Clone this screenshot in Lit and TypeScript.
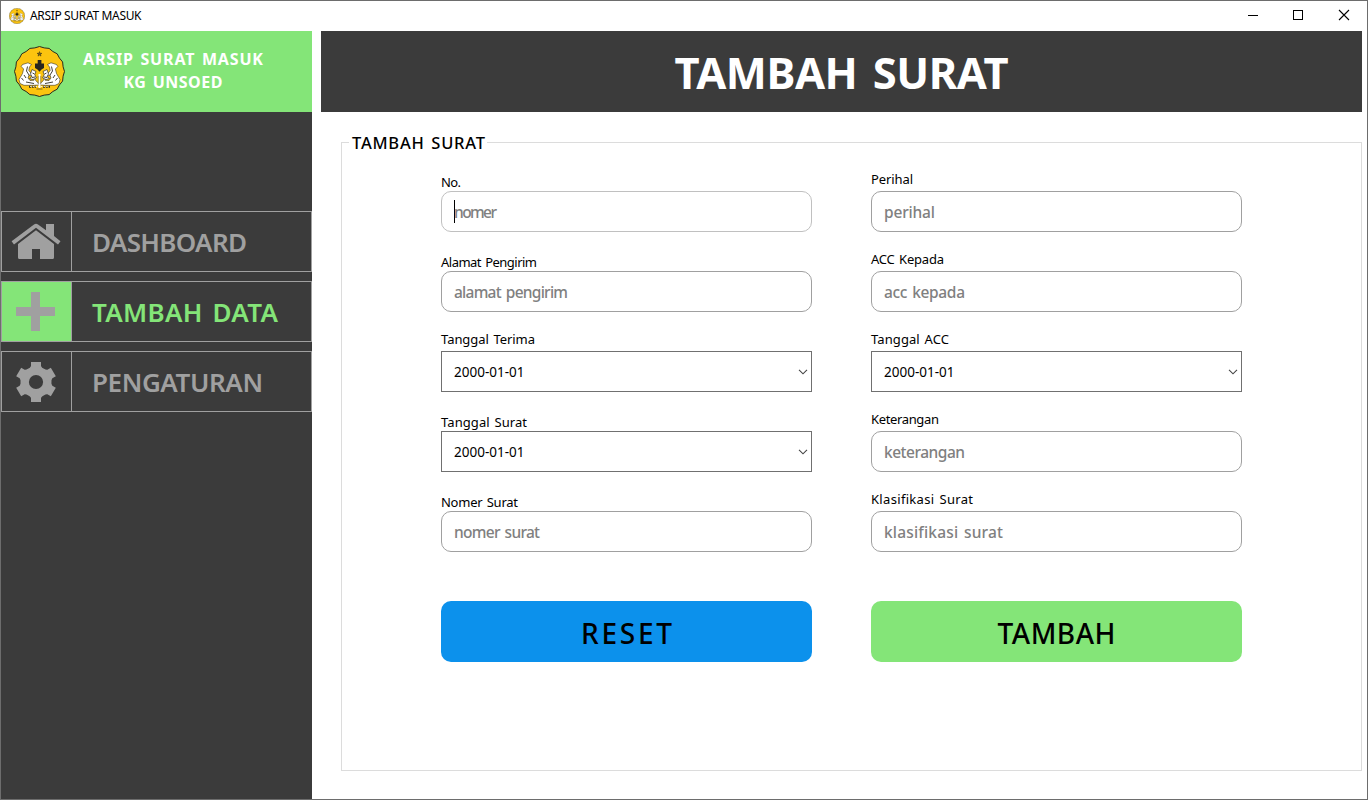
import { LitElement, html, css, svg } from "lit";
import { customElement, property } from "lit/decorators.js";
import { classMap } from "lit/directives/class-map.js";

/** A run of text tracked out (or in) so that it takes up a given width. */
@customElement("tracked-text")
class TrackedText extends LitElement {
  @property() text = "";
  @property({ type: Number }) span = 0;

  static styles = css`
    :host { display: inline-block; white-space: nowrap; word-spacing: 0.1em; }
    .run { display: inline-block; }
  `;

  updated() {
    const run = this.renderRoot.querySelector(".run") as HTMLElement;
    run.style.letterSpacing = "0px";
    const natural = run.getBoundingClientRect().width;
    const step = (this.span - natural) / Math.max(1, this.text.length - 1);
    run.style.letterSpacing = step + "px";
    run.style.marginRight = -step + "px";
  }

  render() {
    return html`<span class="run">${this.text}</span>`;
  }
}

const scallop = (() => {
  let d = "";
  const n = 16;
  for (let i = 0; i < n; i++) {
    const a = (i / n) * Math.PI * 2 - Math.PI / 2;
    const b = ((i + 1) / n) * Math.PI * 2 - Math.PI / 2;
    const m = (a + b) / 2;
    const p = (r: number, t: number) => `${(25.5 + r * Math.cos(t)).toFixed(2)} ${(25.5 + r * Math.sin(t)).toFixed(2)}`;
    d += (i === 0 ? "M" + p(25, a) : "") + "Q" + p(23.6, m) + " " + p(25, b);
  }
  return d + "Z";
})();

const tiger = svg`
  <path d="M8.5 18.5 L14 16.8 L17.5 18.5 L15.5 21 L14.8 24.5 L18 28.5 L20 32 L22.5 35.5 L25 37.5 L25 39 L19 39.3 L10 39.3 L6 37.5 L5 33.5 L8.5 27.5 L9.6 23 L7.2 20.5Z" fill="#fff" stroke="#3a3522" stroke-width=".6"/>
  <path d="M13.5 20.5 L12.5 25 L15 29 M10 29 L12 32 M7.5 32 L9.5 34.5 M12 36 L20 37.5" stroke="#2c2a22" stroke-width=".9" fill="none"/>
  <path d="M15 29 L14 32 L16 34.5 L20 34.2 L18.5 30.5Z" fill="#fcc40f" stroke="#2c2a22" stroke-width=".6"/>
  <path d="M18 23.5 L22 25.5 L20.8 28.5 L22.3 32 L19 33.5 L15.5 32.5 L18 30.5 L16.5 28Z" fill="#fff" stroke="#2c2a22" stroke-width=".7"/>
  <path d="M18.5 27 L20.5 28 M18 31.5 L21 31" stroke="#2c2a22" stroke-width=".9" fill="none"/>`;

const emblem = html`
  <svg class="emblem" viewBox="0 0 51 51">
    <path d=${scallop} fill="#fcc40f" stroke="#2c2b1c" stroke-width="1"/>
    <path d="M25.5 5.6 L26.1 7.3 L27.9 7.3 L26.5 8.4 L27 10.1 L25.5 9.1 L24 10.1 L24.5 8.4 L23.1 7.3 L24.9 7.3Z" fill="#7c6414" stroke="#2c2b1c" stroke-width=".5"/>
    <path d="M23.7 14 H27.4 V17.5 H30 V22 L27.5 23.5 L25.5 25.8 L23.5 23.5 L21 22 V17.5 H23.7Z" fill="#26251f"/>
    <g>${tiger}</g>
    <g transform="translate(51 0) scale(-1 1)">${tiger}</g>
    <path d="M25.5 28 V42" stroke="#fff" stroke-width="2"/>
    <path d="M24.2 30 V38 M26.8 30 V38" stroke="#4a4325" stroke-width=".5"/>
    <path d="M15 40.8 H22 M29 40.8 H36" stroke="#2c2b1c" stroke-width="2" stroke-dasharray="2 .8"/>
    <path d="M16 40.5 H35" stroke="#fff" stroke-width=".8" stroke-dasharray="1.5 1.2"/>
    <path d="M22.5 43 H28.5" stroke="#4a4325" stroke-width=".7"/>
  </svg>`;

const houseIcon = svg`
  <path d="M34 18.3 L52 32 V45.5 Q52 47 50.5 47 H38 V37 H30 V47 H17.5 Q16 47 16 45.5 V32Z"/>
  <path d="M32 12.4 Q34 11.3 36 12.4 L44 18.2 V12 H52 V24 L58.5 29.3 L56 32.5 L34 15.8 L12 32.5 L9.6 29.3Z"/>`;

const plusIcon = svg`<path d="M29 10 H38 V25 H53 V34 H38 V49 H29 V34 H14 V25 H29Z"/>`;

const gearIcon = (() => {
  const tooth = "M27.5 16.5 L29 14 V10 H39 V14 L40.5 16.5 L42 30 H26Z";
  const turns = [0, 60, 120, 180, 240, 300];
  return svg`<mask id="hub"><rect width="69" height="59" fill="#fff"/><circle cx="34" cy="30" r="7.1" fill="#000"/></mask>
    <g mask="url(#hub)"><circle cx="34" cy="30" r="15.5"/>
    ${turns.map((t) => svg`<path d=${tooth} transform=${`rotate(${t} 34 30)`}/>`)}</g>`;
})();

const nav = [
  { text: "DASHBOARD", span: 155, icon: houseIcon, active: false },
  { text: "TAMBAH DATA", span: 186, icon: plusIcon, active: true },
  { text: "PENGATURAN", span: 171, icon: gearIcon, active: false },
];

interface Field { label: string; lw: number; value: string; vw: number; kind: "text" | "date"; low?: boolean; focus?: boolean; }

const left: Field[] = [
  { label: "No.", lw: 20, value: "nomer", vw: 43, kind: "text", low: true, focus: true },
  { label: "Alamat Pengirim", lw: 96, value: "alamat pengirim", vw: 114, kind: "text", low: true },
  { label: "Tanggal Terima", lw: 94, value: "2000-01-01", vw: 70.5, kind: "date" },
  { label: "Tanggal Surat", lw: 86, value: "2000-01-01", vw: 70.5, kind: "date", low: true },
  { label: "Nomer Surat", lw: 77, value: "nomer surat", vw: 86, kind: "text", low: true },
];
const right: Field[] = [
  { label: "Perihal", lw: 42, value: "perihal", vw: 51, kind: "text" },
  { label: "ACC Kepada", lw: 73, value: "acc kepada", vw: 81, kind: "text" },
  { label: "Tanggal ACC", lw: 78, value: "2000-01-01", vw: 70.5, kind: "date" },
  { label: "Keterangan", lw: 68, value: "keterangan", vw: 81, kind: "text" },
  { label: "Klasifikasi Surat", lw: 102, value: "klasifikasi surat", vw: 119, kind: "text" },
];

@customElement("app-root")
class AppRoot extends LitElement {
  static styles = css`
    :host { display: block; font-family: "Comic Sans MS", "Noto Sans", sans-serif; color: #000; }
    * { box-sizing: border-box; }
    .window { width: 1368px; height: 800px; border: 1px solid #6d6d6d; background: #fff; display: flex; flex-direction: column; overflow: hidden; }
    .titlebar { height: 30px; flex: none; display: flex; align-items: center; padding-left: 8px; font: 12px/16px "Noto Sans", sans-serif; }
    .titlebar tracked-text { word-spacing: 0; }
    .titlebar .emblem { width: 16px; height: 16px; margin: -1px 5px 0 0; }
    .caption { margin-left: auto; display: flex; }
    .caption svg { width: 46px; height: 30px; display: block; fill: none; stroke: #000; }
    .body { flex: 1; display: flex; min-height: 0; }
    .sidebar { width: 311px; flex: none; background: #3b3b3b; }
    .brand { height: 81px; background: #84e578; display: flex; align-items: center; padding-left: 13px; color: #fff; font-weight: 700; font-size: 16px; line-height: 23px; }
    .brand .emblem { width: 51px; height: 51px; flex: none; }
    .brand-text { width: 180px; margin-left: 18px; padding-bottom: 2px; display: flex; flex-direction: column; align-items: center; }
    .nav { margin-top: 99px; display: flex; flex-direction: column; gap: 9px; }
    .item { height: 61px; border: 1px solid #a0a0a0; display: flex; align-items: center; color: #a0a0a0; font-size: 26px; font-weight: 600; line-height: 36px; }
    .item svg { width: 70px; height: 59px; flex: none; border-right: 1px solid #a0a0a0; fill: #a0a0a0; margin-right: 20px; }
    .active { color: #84e578; }
    .active svg { background: #84e578; }
    .main { flex: 1; margin: 0 5px 0 9px; display: flex; flex-direction: column; }
    .header { height: 81px; flex: none; background: #3b3b3b; color: #fff; display: flex; align-items: center; justify-content: center; font-weight: 700; font-size: 43.5px; line-height: 60px; padding-top: 1px; }
    .group { margin: 19px 0 28px 20px; padding: 0; border: 1px solid #dcdcdc; flex: 1; min-width: 0; }
    .group legend { margin-left: 7px; padding: 1px 2px 0 3px; font-size: 16.5px; line-height: 21px; font-weight: 500; }
    .form { display: grid; grid-template-columns: 371px 371px; column-gap: 59px; margin: 18px 0 0 99px; }
    .field { height: 80px; }
    .label { height: 20px; font-size: 13px; line-height: 16px; }
    .low { padding-top: 3px; }
    .control { height: 41px; border: 1px solid #a0a0a0; border-radius: 10px; padding: 0 12px; display: flex; align-items: center; font-size: 15.5px; font-weight: 500; color: #808080; }
    .focus { border-color: #c0c0c0; }
    .focus::before { content: ""; width: 1px; height: 23px; background: #000; margin-right: -1px; }
    .date { border-radius: 0; border-color: #707070; color: #000; font-size: 13.5px; font-weight: 400; justify-content: space-between; padding-right: 3px; }
    .date svg { width: 10px; height: 6px; fill: none; stroke: #444; stroke-width: 1.1; }
    .button { margin-top: 30px; height: 61px; border: 0; border-radius: 10px; padding: 3px 0 0; font: inherit; font-size: 28px; line-height: 40px; font-weight: 500; color: #000; }
    .reset { background: #0c91ec; }
    .add { background: #84e578; }
  `;

  private field(f: Field) {
    return html`<div class="field">
      <div class=${classMap({ label: true, low: !!f.low })}><tracked-text .text=${f.label} .span=${f.lw}></tracked-text></div>
      <div class=${classMap({ control: true, date: f.kind === "date", focus: !!f.focus })}>
        <tracked-text .text=${f.value} .span=${f.vw}></tracked-text>
        ${f.kind === "date" ? html`<svg viewBox="0 0 10 6"><path d="M1 .8 L5 4.8 L9 .8"/></svg>` : ""}
      </div>
    </div>`;
  }

  render() {
    return html`<div class="window">
      <div class="titlebar">
        ${emblem}<tracked-text .text=${"ARSIP SURAT MASUK"} .span=${111.5}></tracked-text>
        <div class="caption">
          <svg viewBox="0 0 46 30"><path d="M19 14.5 H29"/></svg>
          <svg viewBox="0 0 46 30"><rect x="18.5" y="9.5" width="9" height="9"/></svg>
          <svg viewBox="0 0 46 30"><path d="M18 9 L28 19 M28 9 L18 19" stroke-width="1.1"/></svg>
        </div>
      </div>
      <div class="body">
        <div class="sidebar">
          <div class="brand">${emblem}
            <div class="brand-text">
              <tracked-text .text=${"ARSIP SURAT MASUK"} .span=${180}></tracked-text>
              <tracked-text .text=${"KG UNSOED"} .span=${99}></tracked-text>
            </div>
          </div>
          <div class="nav">
            ${nav.map((n) => html`<div class=${classMap({ item: true, active: n.active })}>
              <svg viewBox="0 0 69 59">${n.icon}</svg><tracked-text .text=${n.text} .span=${n.span}></tracked-text>
            </div>`)}
          </div>
        </div>
        <div class="main">
          <div class="header"><tracked-text .text=${"TAMBAH SURAT"} .span=${334}></tracked-text></div>
          <fieldset class="group">
            <legend><tracked-text .text=${"TAMBAH SURAT"} .span=${133}></tracked-text></legend>
            <div class="form">
              ${left.map((f, i) => [this.field(f), this.field(right[i])])}
              <button class="button reset"><tracked-text .text=${"RESET"} .span=${91}></tracked-text></button>
              <button class="button add"><tracked-text .text=${"TAMBAH"} .span=${118}></tracked-text></button>
            </div>
          </fieldset>
        </div>
      </div>
    </div>`;
  }
}
